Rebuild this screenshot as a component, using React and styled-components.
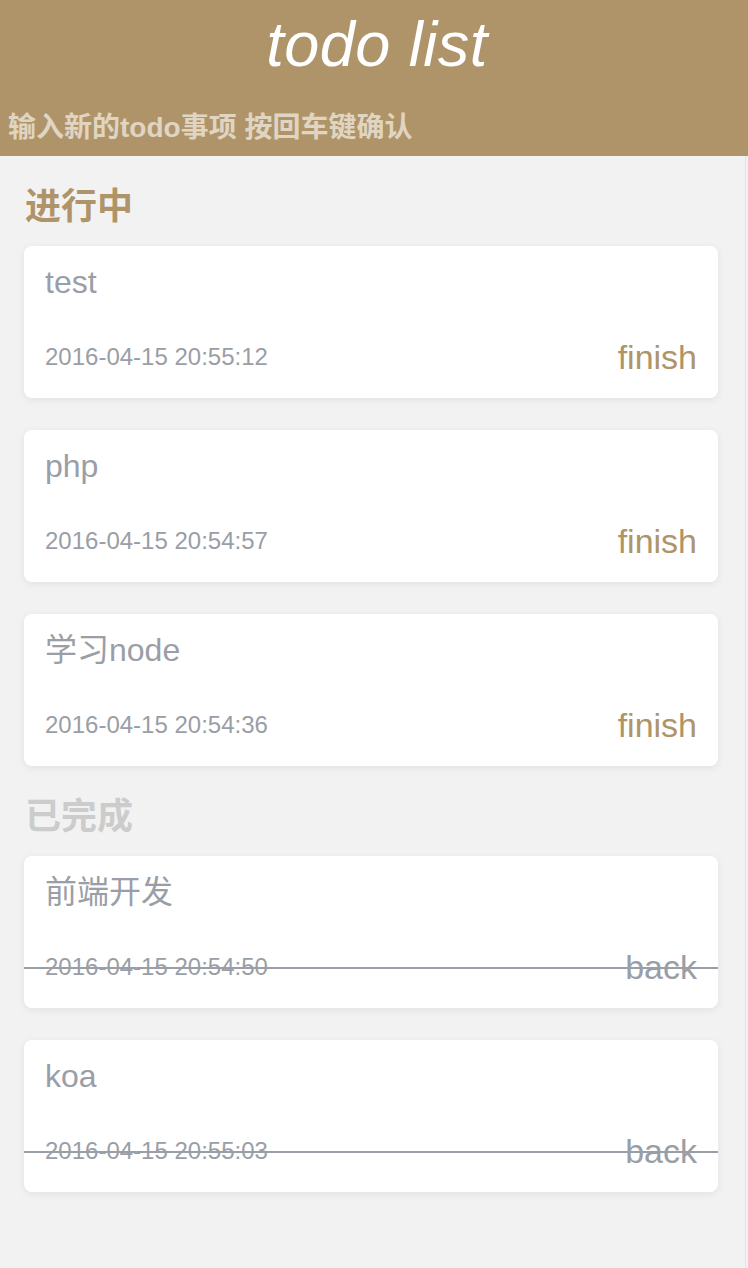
import React from 'react';
import styled, { createGlobalStyle } from 'styled-components';

const GlobalStyle = createGlobalStyle`
  html, body {
    margin: 0;
    padding: 0;
    background: #f2f2f2;
  }
  body {
    font-family: "Liberation Sans", "Noto Sans CJK SC", sans-serif;
  }
`;

const doing = [
  { id: 1, title: 'test', time: '2016-04-15 20:55:12' },
  { id: 2, title: 'php', time: '2016-04-15 20:54:57' },
  { id: 3, title: '学习node', time: '2016-04-15 20:54:36' },
];

const done = [
  { id: 4, title: '前端开发', time: '2016-04-15 20:54:50' },
  { id: 5, title: 'koa', time: '2016-04-15 20:55:03' },
];

const TodoCard = ({ item, finished }) => {
  return (
    <StyledCard>
      <CardTitle>{item.title}</CardTitle>
      <CardFooter $finished={finished}>
        <CardTime>{item.time}</CardTime>
        <CardAction $finished={finished}>{finished ? 'back' : 'finish'}</CardAction>
      </CardFooter>
    </StyledCard>
  );
};

export default function App() {
  return (
    <>
      <GlobalStyle />
      <StyledHeader>
        <HeaderTitle>todo list</HeaderTitle>
        <StyledInput type="text" placeholder="输入新的todo事项 按回车键确认" />
      </StyledHeader>
      <StyledMain>
        <SectionTitle>进行中</SectionTitle>
        <CardList>
          {doing.map((item) => (
            <TodoCard key={item.id} item={item} />
          ))}
        </CardList>
        <SectionTitle $muted>已完成</SectionTitle>
        <CardList>
          {done.map((item) => (
            <TodoCard key={item.id} item={item} finished />
          ))}
        </CardList>
      </StyledMain>
    </>
  );
}

const StyledHeader = styled.header`
  background: #af9469;
  padding: 8px 0 4px;
  height: 156px;
  box-sizing: border-box;
`;

const HeaderTitle = styled.h1`
  margin: 0 0 24px;
  padding-left: 6px;
  text-align: center;
  color: #fff;
  font-size: 63px;
  line-height: 72px;
  font-style: italic;
  font-weight: 400;
  letter-spacing: 0.5px;
`;

const StyledInput = styled.input`
  display: block;
  width: 100%;
  height: 48px;
  box-sizing: border-box;
  padding: 0 8px;
  border: none;
  outline: none;
  background: transparent;
  color: #fff;
  font-family: "Liberation Sans", "Noto Sans CJK SC", sans-serif;
  font-size: 28px;
  font-weight: 700;

  &::placeholder {
    color: #e0d5c2;
  }
`;

const StyledMain = styled.main`
  width: 746px;
  box-sizing: border-box;
  padding: 0 27px 76px 24px;
  border-right: 1px solid #e4e4e4;
`;

const SectionTitle = styled.h2`
  margin: 0 0 15px;
  padding: 27px 0 0 1px;
  line-height: 48px;
  font-size: 36px;
  font-weight: 700;
  color: ${(p) => (p.$muted ? '#cccccc' : '#af9469')};
`;

const CardList = styled.div`
  display: flex;
  flex-direction: column;
  gap: 32px;
`;

const StyledCard = styled.div`
  background: #fff;
  border-radius: 8px;
  padding: 16px 21px 21px;
  box-shadow: 0 2px 8px rgba(0, 0, 0, 0.07);
`;

const CardTitle = styled.div`
  font-size: 32px;
  line-height: 40px;
  color: #9a9ea6;
`;

const CardFooter = styled.div`
  position: relative;
  display: flex;
  align-items: center;
  justify-content: space-between;
  margin-top: 35px;
  height: 40px;
  line-height: 40px;

  &::after {
    content: '';
    display: ${(p) => (p.$finished ? 'block' : 'none')};
    position: absolute;
    top: 20px;
    left: -21px;
    right: -21px;
    height: 2px;
    background: #9a9ea6;
  }
`;

const CardTime = styled.span`
  font-size: 24px;
  color: #9a9ea6;
`;

const CardAction = styled.span`
  font-size: 34px;
  color: ${(p) => (p.$finished ? '#9a9ea6' : '#af9469')};
  cursor: pointer;
`;
